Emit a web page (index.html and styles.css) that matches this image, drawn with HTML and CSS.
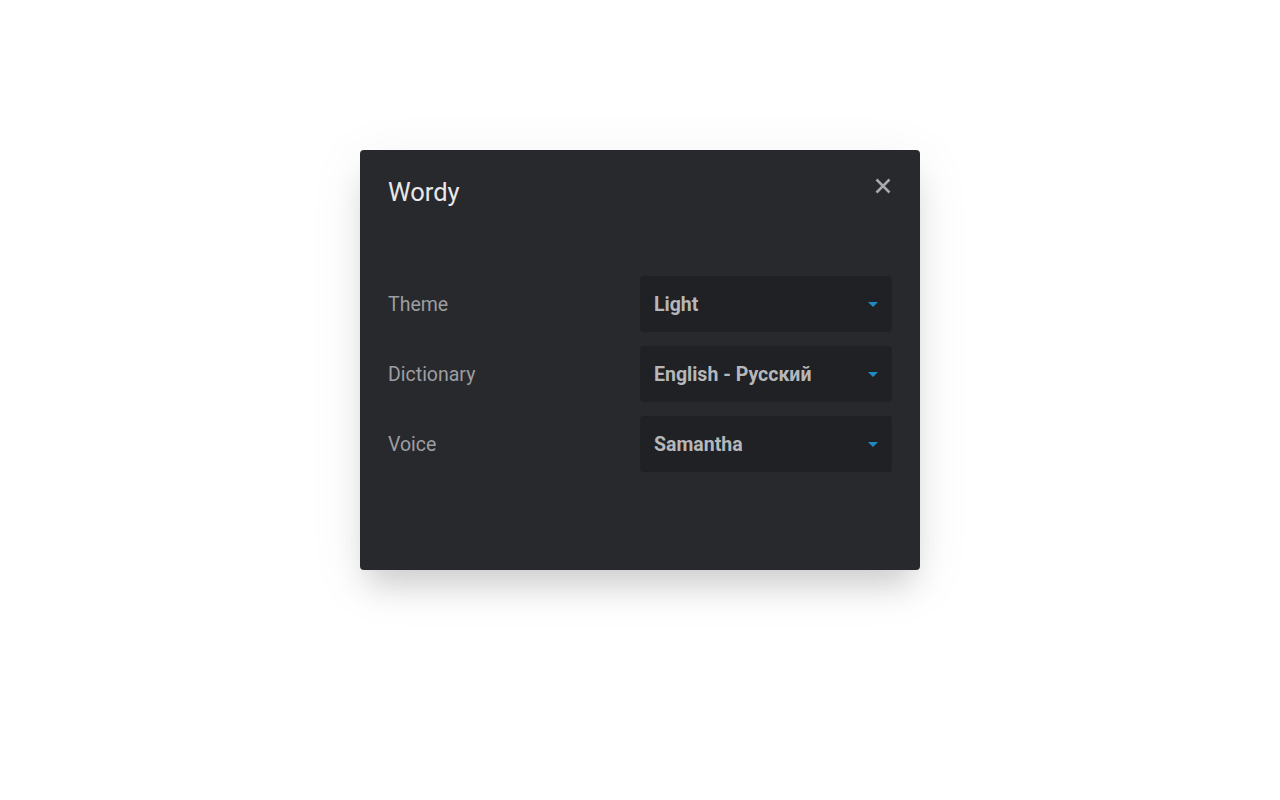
FILE: index.html
```html
<!doctype html>
<html>
	<head>
		<meta charset="utf-8"/>
		<meta name="viewport" content="width=device-width, initial-scale=1" />
		<title>Wordy</title>
		<link rel="stylesheet" href="styles.css">
	</head>
	<body>
		<div class="dialog">
			<div class="dialog-header">
				<h1 class="dialog-title">Wordy</h1>
				<button class="close-btn" aria-label="Close">
					<svg width="18" height="18" viewBox="0 0 18 18">
						<path d="M2.5 2.5 L15.5 15.5 M15.5 2.5 L2.5 15.5" stroke="currentColor" stroke-width="2.5" stroke-linecap="butt"/>
					</svg>
				</button>
			</div>

			<div class="settings">
				<div class="setting-row">
					<div class="setting-label">Theme</div>
					<div class="select">
						<span class="select-value">Light</span>
						<span class="select-arrow"></span>
					</div>
				</div>
				<div class="setting-row">
					<div class="setting-label">Dictionary</div>
					<div class="select">
						<span class="select-value">English - Русский</span>
						<span class="select-arrow"></span>
					</div>
				</div>
				<div class="setting-row">
					<div class="setting-label">Voice</div>
					<div class="select">
						<span class="select-value">Samantha</span>
						<span class="select-arrow"></span>
					</div>
				</div>
			</div>
		</div>
	</body>
</html>
```

FILE: styles.css
```css
html {
	background-color: #fff;
}

body {
	margin: 0;
	min-height: 100vh;
	font-family: Roboto, "Noto Sans", "Liberation Sans", sans-serif;
	display: flex;
	justify-content: center;
	align-items: flex-start;
	box-sizing: border-box;
	padding-top: 150px;
}

.dialog {
	box-sizing: border-box;
	width: 560px;
	height: 420px;
	padding: 26px 28px 28px 28px;
	background-color: #28292d;
	border-radius: 4px;
	box-shadow: 0 22px 30px -8px rgba(0, 0, 0, 0.16),
		0 12px 56px 4px rgba(0, 0, 0, 0.06);
}

.dialog-header {
	display: flex;
	justify-content: space-between;
	align-items: flex-start;
	height: 100px;
}

.dialog-title {
	margin: 0;
	font-size: 25.5px;
	font-weight: 400;
	line-height: 32px;
	color: #e8e8ea;
}

.close-btn {
	background: none;
	border: none;
	padding: 0;
	margin-top: 1px;
	width: 18px;
	height: 18px;
	color: #a8a9ac;
	cursor: pointer;
}

.close-btn svg {
	display: block;
}

.settings {
	display: flex;
	flex-direction: column;
	gap: 14px;
}

.setting-row {
	display: flex;
	justify-content: space-between;
	align-items: center;
}

.setting-label {
	font-size: 19.5px;
	color: #9d9ea1;
}

.select {
	box-sizing: border-box;
	width: 252px;
	height: 56px;
	padding: 0 14px;
	display: flex;
	justify-content: space-between;
	align-items: center;
	background-color: #202124;
	border-radius: 4px;
	cursor: pointer;
}

.select-value {
	font-size: 19.5px;
	font-weight: 700;
	color: #b6b7ba;
}

.select-arrow {
	width: 0;
	height: 0;
	border-left: 5px solid transparent;
	border-right: 5px solid transparent;
	border-top: 5px solid #1e8bc3;
}
```
